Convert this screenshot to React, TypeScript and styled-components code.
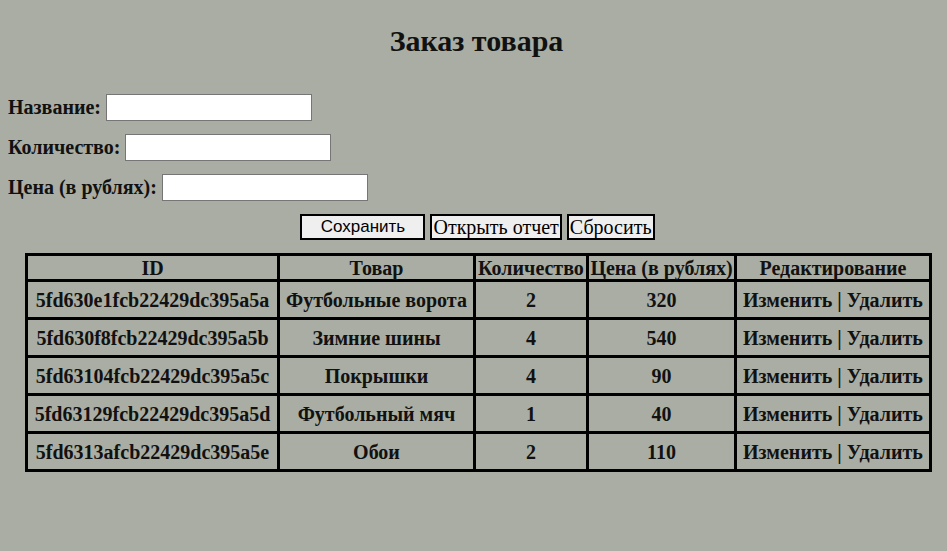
import React from "react";
import styled, { createGlobalStyle } from "styled-components";

const Global = createGlobalStyle`
  html, body { margin: 0; padding: 0; }
  body {
    background: #a9ada3;
    font-family: "Liberation Serif", "Times New Roman", serif;
    color: #111;
    padding: 8px;
    min-height: 551px;
    box-sizing: border-box;
  }
`;

const Page = styled.div`
  display: flex;
  flex-direction: column;
`;

const Title = styled.h2`
  margin: 16px 0 0;
  padding-left: 6px;
  text-align: center;
  font-size: 30px;
  font-weight: bold;
  line-height: 34px;
`;

const Form = styled.form`
  display: flex;
  flex-direction: column;
  gap: 13px;
  margin-top: 36px;
`;

const Field = styled.label`
  display: flex;
  align-items: center;
  gap: 5px;
  font-size: 20px;
  font-weight: bold;
  height: 27px;
`;

const Input = styled.input`
  width: 206px;
  height: 27px;
  box-sizing: border-box;
  border: 1px solid #767676;
  background: #fff;
  padding: 1px 2px;
  margin: 0;
`;

const Buttons = styled.div`
  display: flex;
  justify-content: center;
  gap: 5px;
  margin-top: 13px;
  padding-left: 8px;
`;

const Button = styled.button<{ $sans?: boolean }>`
  height: 26px;
  box-sizing: border-box;
  border: 2px solid #000;
  background: #efefef;
  color: #000;
  padding: 0 1px;
  font-family: ${(p) =>
    p.$sans ? '"Liberation Sans", Arial, sans-serif' : '"Liberation Serif", "Times New Roman", serif'};
  font-size: ${(p) => (p.$sans ? "17px" : "20px")};
  line-height: 22px;
  width: ${(p) => (p.$sans ? "125px" : "auto")};
`;

const Table = styled.table`
  margin: 13px 0 0 17px;
  border-collapse: collapse;
  border: 3px solid #000;
  table-layout: fixed;
  width: 904px;
`;

const Th = styled.th`
  border: 3px solid #000;
  height: 26px;
  padding: 0 1px;
  font-size: 20px;
  font-weight: bold;
  line-height: 22px;
  text-align: center;
  white-space: nowrap;
  box-sizing: border-box;
`;

const Td = styled.td`
  border: 3px solid #000;
  height: 35px;
  padding: 0 1px;
  font-size: 20px;
  font-weight: bold;
  line-height: 22px;
  text-align: center;
  white-space: nowrap;
`;

const Col = styled.col<{ $w: number }>`
  width: ${(p) => p.$w}px;
`;

const rows = [
  ["5fd630e1fcb22429dc395a5a", "Футбольные ворота", "2", "320"],
  ["5fd630f8fcb22429dc395a5b", "Зимние шины", "4", "540"],
  ["5fd63104fcb22429dc395a5c", "Покрышки", "4", "90"],
  ["5fd63129fcb22429dc395a5d", "Футбольный мяч", "1", "40"],
  ["5fd6313afcb22429dc395a5e", "Обои", "2", "110"],
];

export default function App() {
  return (
    <Page>
      <Global />
      <Title>Заказ товара</Title>
      <Form onSubmit={(e) => e.preventDefault()}>
        <Field>
          Название: <Input type="text" />
        </Field>
        <Field>
          Количество: <Input type="text" />
        </Field>
        <Field>
          Цена (в рублях): <Input type="text" />
        </Field>
      </Form>
      <Buttons>
        <Button $sans>Сохранить</Button>
        <Button>Открыть отчет</Button>
        <Button>Сбросить</Button>
      </Buttons>
      <div>
        <Table>
          <colgroup>
            <Col $w={252} />
            <Col $w={196} />
            <Col $w={113} />
            <Col $w={148} />
            <Col $w={195} />
          </colgroup>
          <thead>
            <tr>
              <Th>ID</Th>
              <Th>Товар</Th>
              <Th>Количество</Th>
              <Th>Цена (в рублях)</Th>
              <Th>Редактирование</Th>
            </tr>
          </thead>
          <tbody>
            {rows.map((r) => (
              <tr key={r[0]}>
                <Td>{r[0]}</Td>
                <Td>{r[1]}</Td>
                <Td>{r[2]}</Td>
                <Td>{r[3]}</Td>
                <Td>Изменить | Удалить</Td>
              </tr>
            ))}
          </tbody>
        </Table>
      </div>
    </Page>
  );
}
